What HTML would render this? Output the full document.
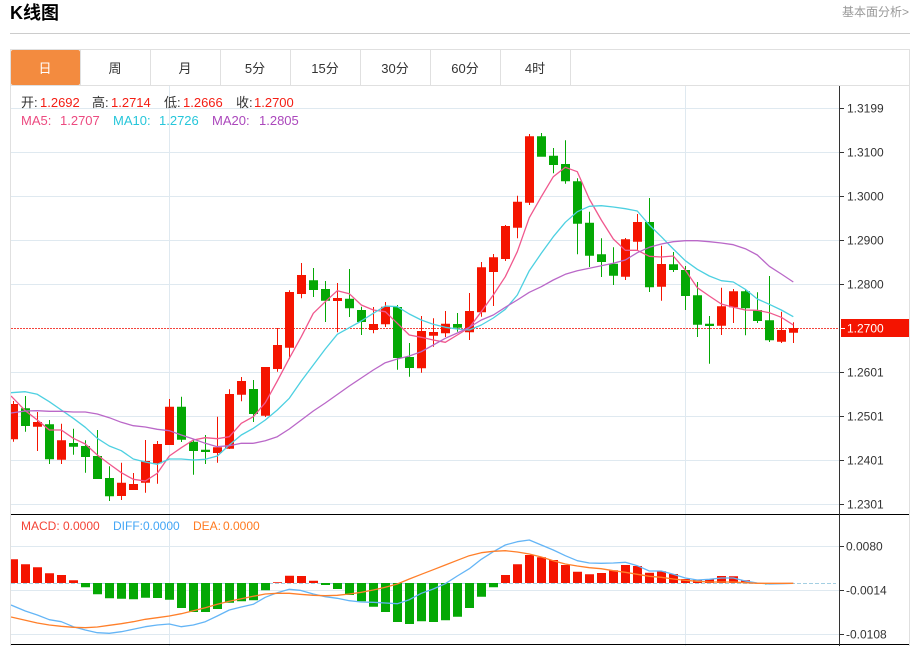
<!DOCTYPE html>
<html lang="zh"><head><meta charset="utf-8"><title>K线图</title>
<style>
html,body{margin:0;padding:0;background:#fff;width:920px;height:646px;overflow:hidden}
svg{display:block}
text{font-family:"Liberation Sans","Noto Sans CJK SC",sans-serif;font-size:13px}
.ax text{font-size:12px;fill:#333}
.tab text{font-size:13px;fill:#333;text-anchor:middle}
</style></head><body>
<svg width="920" height="646" viewBox="0 0 920 646" xmlns="http://www.w3.org/2000/svg">
<defs><clipPath id="c"><rect x="11" y="86" width="828" height="560"/></clipPath></defs>
<text x="10" y="19" style="font-size:18px;font-weight:700;fill:#000">K线图</text>
<text x="842" y="16" style="font-size:12px;fill:#999">基本面分析&gt;</text>
<rect x="10" y="33" width="900" height="1" fill="#ccc"/>
<!-- frame -->
<path d="M10 49.5H909.5V646M10.5 49V646M10 85.5H910" fill="none" stroke="#e0e0e0"/>
<rect x="11" y="50" width="69" height="35" rx="2" fill="#f38b3f"/>
<path d="M150.5 50V85M220.5 50V85M290.5 50V85M360.5 50V85M430.5 50V85M500.5 50V85M570.5 50V85M80.5 50V85" stroke="#e0e0e0"/>
<g class="tab">
<text x="45" y="73" style="fill:#fff">日</text>
<text x="115" y="73">周</text><text x="185" y="73">月</text><text x="255" y="73">5分</text>
<text x="325" y="73">15分</text><text x="395" y="73">30分</text><text x="465" y="73">60分</text><text x="535" y="73">4时</text>
</g>
<!-- grid -->
<path d="M11 108.5H839M11 152.5H839M11 196.5H839M11 240.5H839M11 284.5H839M11 372.5H839M11 416.5H839M11 460.5H839M11 504.5H839M11 546.5H839M11 590.5H839M11 634.5H839M169.5 86V646M685.5 86V646" stroke="#dfe9f0" fill="none"/>
<line x1="11" y1="328.5" x2="839" y2="328.5" stroke="#f4433c" stroke-dasharray="2 1"/>
<g clip-path="url(#c)">
<!-- green candles -->
<path fill="#04a804" d="M25 396h1V431.7h-1zM21 408.3h9V426h-9zM49 420h1V464h-1zM45 424.3h9V459.3h-9zM73 428.7h1V454.7h-1zM69 443h9V446.7h-9zM85 440.3h1V472.7h-1zM81 446h9V457h-9zM97 430h1V479h-1zM93 456h9V479h-9zM109 466.3h1V501h-1zM105 478h9V496.3h-9zM181 396.7h1V442h-1zM177 406.7h9V439.7h-9zM193 439.3h1V474.7h-1zM189 441.7h9V451h-9zM205 435h1V464h-1zM201 449.7h9V452h-9zM253 380h1V422h-1zM249 389h9V414h-9zM313 268h1V297h-1zM309 280.3h9V290h-9zM325 281h1V322h-1zM321 289h9V300.7h-9zM349 269h1V317h-1zM345 298.7h9V308.3h-9zM361 306.7h1V335h-1zM357 310h9V322h-9zM397 305h1V369.7h-1zM393 307h9V358h-9zM409 343h1V376.7h-1zM405 357h9V368h-9zM457 313h1V331.7h-1zM453 324h9V327.7h-9zM541 133h1V156.7h-1zM537 136.3h9V156.7h-9zM553 148h1V173.3h-1zM549 155.7h9V165h-9zM565 140.3h1V183.7h-1zM561 164h9V181.3h-9zM577 178.3h1V254.3h-1zM573 181.3h9V223.7h-9zM589 211.7h1V267h-1zM585 222.7h9V255.7h-9zM601 238.3h1V277h-1zM597 254.3h9V262h-9zM613 247.3h1V285h-1zM609 263.7h9V275.7h-9zM649 198h1V292h-1zM645 222h9V287.3h-9zM673 252h1V272h-1zM669 264.3h9V270h-9zM685 266h1V310h-1zM681 270h9V296h-9zM697 282h1V337h-1zM693 295.3h9V324.7h-9zM709 316h1V363.7h-1zM705 323.7h9V326h-9zM745 290h1V335.3h-1zM741 291.3h9V308.3h-9zM757 292.3h1V323h-1zM753 310h9V321h-9zM769 276h1V342h-1zM765 320.3h9V340.3h-9z"/>
<!-- red candles -->
<path fill="#f41400" d="M13 401h1V441.7h-1zM9 404h9V439.3h-9zM37 412h1V451h-1zM33 422h9V426.7h-9zM61 423.7h1V464h-1zM57 440.3h9V459.7h-9zM121 462.7h1V500h-1zM117 482.7h9V496h-9zM133 473h1V490h-1zM129 484h9V490h-9zM145 440h1V492.7h-1zM141 461h9V482.7h-9zM157 441h1V483.7h-1zM153 444h9V463.3h-9zM169 399h1V445h-1zM165 406.7h9V445h-9zM217 416.7h1V462.7h-1zM213 447.3h9V453h-9zM229 389.3h1V449h-1zM225 394h9V448.7h-9zM241 377h1V401.3h-1zM237 381h9V394.7h-9zM265 367h1V417h-1zM261 367h9V415.7h-9zM277 328h1V371.7h-1zM273 345h9V369h-9zM289 290.3h1V359h-1zM285 292h9V347.7h-9zM301 263h1V298.3h-1zM297 275h9V294h-9zM337 283h1V332.3h-1zM333 298h9V301h-9zM373 307h1V333.3h-1zM369 324h9V330h-9zM385 302h1V327h-1zM381 306.7h9V324.3h-9zM421 316h1V372.7h-1zM417 331h9V368.3h-9zM433 318.3h1V346.7h-1zM429 332h9V335.7h-9zM445 311h1V337h-1zM441 323.7h9V333.3h-9zM469 293h1V340h-1zM465 311h9V332.3h-9zM481 262h1V316.7h-1zM477 267.3h9V312.3h-9zM493 254h1V306h-1zM489 257.3h9V272h-9zM505 225h1V261h-1zM501 226h9V259h-9zM517 195.7h1V238.3h-1zM513 201.7h9V227.7h-9zM529 134h1V205h-1zM525 136.3h9V202.7h-9zM625 238h1V280h-1zM621 239.3h9V276.7h-9zM637 214h1V250h-1zM633 222h9V241.7h-9zM661 245.7h1V300.7h-1zM657 264h9V286.7h-9zM721 287.7h1V335h-1zM717 306.3h9V325.7h-9zM733 289h1V323h-1zM729 291.3h9V307.3h-9zM781 311.7h1V343h-1zM777 330h9V341.7h-9zM793 322.3h1V343h-1zM789 328h9V332.7h-9z"/>
<!-- MA lines -->
<g fill="none" stroke-width="1.3" stroke-linejoin="round">
<polyline stroke="#f0588e" points="11,396 25.3,410.7 37.3,420 49.3,430 61.3,430 73.3,438.3 85.3,444 97.3,455 109.3,464 121.3,472.7 133.3,479.3 145.3,481 157.3,473.3 169.3,456 181.3,447.7 193.3,440 205.3,437.7 217.3,438.7 229.3,436.7 241.3,423.3 253.3,416.7 265.3,402.7 277.3,381 289.3,358.3 301.3,336.7 313.3,313.3 325.3,301.7 337.3,290.7 349.3,293.7 361.3,305 373.3,310 385.3,311.7 397.3,323.3 409.3,335 421.3,337.3 433.3,340 445.3,342.3 457.3,335 469.3,327.7 481.3,311.7 493.3,295 505.3,276.7 517.3,251.7 529.3,217.7 541.3,196.7 553.3,176.7 565.3,167.3 577.3,171.7 589.3,199 601.3,220 613.3,239 625.3,250.3 637.3,250.3 649.3,256.3 661.3,257 673.3,256 685.3,270 697.3,287.7 709.3,296 721.3,304 733.3,307.3 745.3,310 757.3,310.3 769.3,312.7 781.3,317.3 793.3,325"/>
<polyline stroke="#4dd0e1" points="11,392.7 25.3,391.7 37.3,394.3 49.3,401.7 61.3,410 73.3,418.3 85.3,427.3 97.3,438.3 109.3,446 121.3,450.7 133.3,459 145.3,462 157.3,464.3 169.3,459 181.3,459 193.3,460 205.3,459.3 217.3,456 229.3,445 241.3,435 253.3,428.3 265.3,420 277.3,410 289.3,398.3 301.3,381 313.3,365 325.3,349 337.3,334.3 349.3,327.7 361.3,321 373.3,313.3 385.3,306 397.3,306.7 409.3,314 421.3,320 433.3,324.3 445.3,327.3 457.3,329 469.3,330 481.3,325 493.3,318 505.3,309.3 517.3,295 529.3,270.7 541.3,253.3 553.3,236.7 565.3,222.3 577.3,211.7 589.3,206.3 601.3,205.7 613.3,207 625.3,208.7 637.3,211 649.3,225 661.3,236.7 673.3,249 685.3,260.7 697.3,269.3 709.3,276 721.3,280.7 733.3,282 745.3,289.3 757.3,299 769.3,304.3 781.3,310 793.3,316.7"/>
<polyline stroke="#ba68c8" points="11,413 25.3,411 37.3,410.7 49.3,411.3 61.3,411.3 73.3,412 85.3,412 97.3,414 109.3,417.7 121.3,422.3 133.3,425.7 145.3,427 157.3,429.3 169.3,430.7 181.3,435 193.3,439 205.3,443.3 217.3,446.7 229.3,445.7 241.3,443.3 253.3,443.3 265.3,440.7 277.3,436.7 289.3,429 301.3,420 313.3,411 325.3,403 337.3,394.5 349.3,386 361.3,378 373.3,370 385.3,362.7 397.3,359 409.3,356 421.3,351.7 433.3,345 445.3,338.3 457.3,333 469.3,327.3 481.3,320 493.3,315 505.3,307.3 517.3,300 529.3,292.3 541.3,286.7 553.3,280 565.3,274.3 577.3,270.7 589.3,268.3 601.3,265.7 613.3,263.3 625.3,260 637.3,252.7 649.3,247.3 661.3,244 673.3,241.7 685.3,240.7 697.3,240.7 709.3,241.7 721.3,243 733.3,244.7 745.3,248.7 757.3,255 769.3,266.3 781.3,274 793.3,282"/>
</g>
<!-- MACD -->
<line x1="11" y1="583.5" x2="836" y2="583.5" stroke="#a4cfe2" stroke-dasharray="4 2"/>
<path fill="#f41400" d="M9 559.3h9V583h-9zM21 564.3h9V583h-9zM33 567.3h9V583h-9zM45 573.3h9V583h-9zM57 575h9V583h-9zM69 580.3h9V583h-9zM273 582.3h9V583h-9zM285 575.7h9V583h-9zM297 576h9V583h-9zM309 580.7h9V583h-9zM501 575h9V583h-9zM513 564.3h9V583h-9zM525 555h9V583h-9zM537 557.3h9V583h-9zM549 560h9V583h-9zM561 565h9V583h-9zM573 571.7h9V583h-9zM585 574.3h9V583h-9zM597 573h9V583h-9zM609 570.3h9V583h-9zM621 565h9V583h-9zM633 566h9V583h-9zM645 572.7h9V583h-9zM657 571.3h9V583h-9zM669 574h9V583h-9zM681 579h9V583h-9zM693 579.7h9V583h-9zM705 579.3h9V583h-9zM717 576h9V583h-9zM729 576.3h9V583h-9zM741 580.3h9V583h-9z"/>
<path fill="#04a804" d="M81 583h9V587.3h-9zM93 583h9V594.3h-9zM105 583h9V598.3h-9zM117 583h9V598.7h-9zM129 583h9V599.3h-9zM141 583h9V597.7h-9zM153 583h9V598h-9zM165 583h9V599.7h-9zM177 583h9V608h-9zM189 583h9V612h-9zM201 583h9V612h-9zM213 583h9V609h-9zM225 583h9V602.7h-9zM237 583h9V601.3h-9zM249 583h9V600.3h-9zM261 583h9V590.3h-9zM321 583h9V585h-9zM333 583h9V589h-9zM345 583h9V595h-9zM357 583h9V601.3h-9zM369 583h9V606.7h-9zM381 583h9V612h-9zM393 583h9V622h-9zM405 583h9V624h-9zM417 583h9V621.3h-9zM429 583h9V622h-9zM441 583h9V620.3h-9zM453 583h9V616.7h-9zM465 583h9V608h-9zM477 583h9V596.7h-9zM489 583h9V587.3h-9zM765 583h9V584.5h-9z"/>
<g fill="none" stroke-width="1.3" stroke-linejoin="round">
<polyline stroke="#64b5f6" points="11,605 25.3,611 37.3,615 49.3,619.7 61.3,621.7 73.3,626.7 85.3,630 97.3,632.7 109.3,633.3 121.3,631.7 133.3,629.3 145.3,626.7 157.3,625 169.3,624 181.3,626.7 193.3,625 205.3,621.7 217.3,616 229.3,610 241.3,607 253.3,604.3 265.3,597.3 277.3,592.7 289.3,589.3 300,590.3 313.3,594 325.3,596.7 337.3,598.3 349.3,600.7 361.3,602 373.3,602.3 385.3,603 397.3,603.7 409.3,599.7 421.3,593.3 433.3,589 445.3,583.7 457.3,576 469.3,568.7 481.3,559.3 493.3,551.7 505.3,545 517.3,541.7 529.3,540 541.3,545 553.3,550 565.3,555.7 577.3,560.7 589.3,563 601,563.3 613.3,563 625.3,562.3 637.3,565.7 649.3,571 661.3,571 673.3,574.3 685.3,578 697.3,580 709.3,579.3 721.3,578 733.3,578 745.3,581 757.3,583 769.3,584 781.3,583.7 793.3,583.3"/>
<polyline stroke="#ff7f2a" points="11,617 25.3,620.3 37.3,623 49.3,625 61.3,626.3 73.3,627.3 85.3,627.7 97.3,627 109.3,625.3 121.3,623.7 133.3,621.7 145.3,619.3 157.3,617.7 169.3,616 181.3,613.7 193.3,610.7 205.3,607.7 217.3,604.3 229.3,601.3 241.3,598.7 253.3,596.3 265.3,594 277.3,593.3 289.3,593.3 300,594.3 313.3,595.3 325.3,595.7 337.3,595.3 349.3,594 361.3,592.3 373.3,590 385.3,587.3 397.3,584 409.3,579 421.3,574.3 433.3,569.7 445.3,565 457.3,560.3 469.3,555.7 481.3,552.7 493.3,551.3 505.3,550.7 517.3,552 529.3,554 541.3,557 553.3,560.7 565.3,564 577.3,566 589.3,567.7 601,568.7 613.3,570.7 625.3,572.3 637.3,574.3 649.3,576.3 661.3,577.3 673.3,579 685.3,580.3 697.3,581.3 709.3,582 721.3,582 733.3,582 745.3,582.7 757.3,583.3 769.3,583.3 781.3,583.3 793.3,583.3"/>
</g>
</g>
<!-- black lines and axis -->
<path d="M11 514.5H909M11 644.5H909" stroke="#000"/>
<path d="M839.5 86V646" stroke="#333"/>
<path d="M840 108.5h4M840 152.5h4M840 196.5h4M840 240.5h4M840 284.5h4M840 372.5h4M840 416.5h4M840 460.5h4M840 504.5h4M840 546.5h4M840 590.5h4M840 634.5h4" stroke="#333"/>
<rect x="841" y="319" width="68" height="18" fill="#f41400"/>
<path d="M841 328.5h4" stroke="#fff"/>
<g class="ax">
<text x="847" y="112.5">1.3199</text><text x="847" y="156.5">1.3100</text><text x="847" y="200.5">1.3000</text><text x="847" y="244.5">1.2900</text><text x="847" y="288.5">1.2800</text>
<text x="847" y="332.5" style="fill:#fff">1.2700</text>
<text x="847" y="376.5">1.2601</text><text x="847" y="420.5">1.2501</text><text x="847" y="464.5">1.2401</text><text x="847" y="508.5">1.2301</text>
<text x="846" y="550.5">0.0080</text><text x="846" y="594.5">-0.0014</text><text x="846" y="638.5">-0.0108</text>
</g>
<!-- legends -->
<g fill="#f41e14">
<text x="21" y="107" fill="#333">开:</text><text x="40" y="107">1.2692</text>
<text x="92" y="107" fill="#333">高:</text><text x="111" y="107">1.2714</text>
<text x="164" y="107" fill="#333">低:</text><text x="183" y="107">1.2666</text>
<text x="236" y="107" fill="#333">收:</text><text x="254" y="107">1.2700</text>
</g>
<text x="21" y="125" fill="#ec4a80">MA5:</text><text x="60" y="125" fill="#ec4a80">1.2707</text>
<text x="113" y="125" fill="#26c6da">MA10:</text><text x="159" y="125" fill="#26c6da">1.2726</text>
<text x="212" y="125" fill="#ab47bc">MA20:</text><text x="259" y="125" fill="#ab47bc">1.2805</text>
<g style="font-size:12px">
<text x="21" y="530" style="font-size:12px" fill="#f44336">MACD:</text><text x="63" y="530" style="font-size:12px" fill="#f44336">0.0000</text>
<text x="113" y="530" style="font-size:12px" fill="#42a5f5">DIFF:</text><text x="143" y="530" style="font-size:12px" fill="#42a5f5">0.0000</text>
<text x="193" y="530" style="font-size:12px" fill="#ff7a20">DEA:</text><text x="223" y="530" style="font-size:12px" fill="#ff7a20">0.0000</text>
</g>
</svg>
</body></html>
